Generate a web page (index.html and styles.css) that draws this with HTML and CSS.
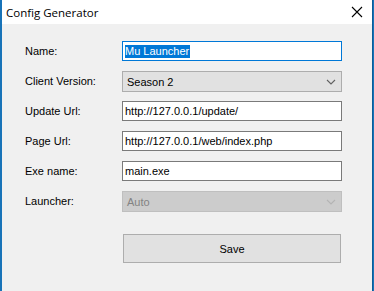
FILE: index.html
```html
<!DOCTYPE html>
<html>
<head>
<meta charset="utf-8">
<link rel="stylesheet" href="styles.css">
</head>
<body>
<div class="window">
  <div class="titlebar">
    <span class="title">Config Generator</span>
    <svg class="close" width="12" height="12" viewBox="0 0 12 12"><path d="M1 1L11 11M11 1L1 11" stroke="#000" stroke-width="1.1" fill="none"/></svg>
  </div>
  <div class="client">
    <div class="form">
      <div class="label">Name:</div>
      <div class="textbox focused"><span class="sel">Mu Launcher</span></div>

      <div class="label">Client Version:</div>
      <div class="combo"><span>Season 2</span><svg class="chev" width="10" height="6" viewBox="0 0 10 6"><path d="M1 1L5 5L9 1" stroke="#606060" stroke-width="1.1" fill="none"/></svg></div>

      <div class="label">Update Url:</div>
      <div class="textbox">http://127.0.0.1/update/</div>

      <div class="label">Page Url:</div>
      <div class="textbox">http://127.0.0.1/web/index.php</div>

      <div class="label">Exe name:</div>
      <div class="textbox">main.exe</div>

      <div class="label">Launcher:</div>
      <div class="combo disabled"><span>Auto</span><svg class="chev" width="10" height="6" viewBox="0 0 10 6"><path d="M1 1L5 5L9 1" stroke="#b4b4b4" stroke-width="1.1" fill="none"/></svg></div>

      <div class="button">Save</div>
    </div>
  </div>
</div>
</body>
</html>
```
FILE: styles.css
```css
html, body {
  margin: 0;
  padding: 0;
}
body {
  width: 374px;
  height: 291px;
  background: #1873b8;
  overflow: hidden;
  font-family: "Liberation Sans", Arial, sans-serif;
  font-size: 11px;
  color: #000;
}
.window {
  margin-left: 2px;
  width: 370px;
  height: 291px;
  border-right: 1px solid #0b5c99;
  background: #f0f0f0;
  display: flex;
  flex-direction: column;
}
.titlebar {
  height: 24px;
  background: #fff;
  display: flex;
  align-items: center;
  justify-content: space-between;
  padding: 0 9px 0 4px;
}
.title {
  font-family: "Open Sans", sans-serif;
  font-size: 11.5px;
  color: #000;
  margin-top: 0px;
}
.close {
  display: block;
}
.client {
  flex: 1;
  padding: 17px 0 0 23px;
}
.form {
  display: grid;
  grid-template-columns: 97px 220px;
  grid-auto-rows: 30px;
}
.label {
  line-height: 21px;
  height: 21px;
}
.textbox {
  box-sizing: border-box;
  height: 20px;
  border: 1px solid #7a7a7a;
  background: #fff;
  padding-left: 2px;
  line-height: 18px;
  white-space: nowrap;
}
.textbox.focused {
  border-color: #0078d7;
  display: flex;
  align-items: center;
}
.sel {
  background: #0078d7;
  color: #fff;
  line-height: 13px;
  height: 13px;
  padding-right: 1px;
}
.combo {
  box-sizing: border-box;
  height: 21px;
  border: 1px solid #adadad;
  background: #e1e1e1;
  padding: 0 4px 0 4px;
  display: flex;
  align-items: center;
  justify-content: space-between;
}
.combo .chev {
  display: block;
  margin-right: 1px;
}
.combo.disabled {
  background: #cccccc;
  border-color: #bfbfbf;
  color: #838383;
}
.button {
  grid-column: 2;
  margin: 13px 0 0 1px;
  width: 218px;
  height: 29px;
  box-sizing: border-box;
  border: 1px solid #adadad;
  background: #e1e1e1;
  display: flex;
  align-items: center;
  justify-content: center;
}
```
